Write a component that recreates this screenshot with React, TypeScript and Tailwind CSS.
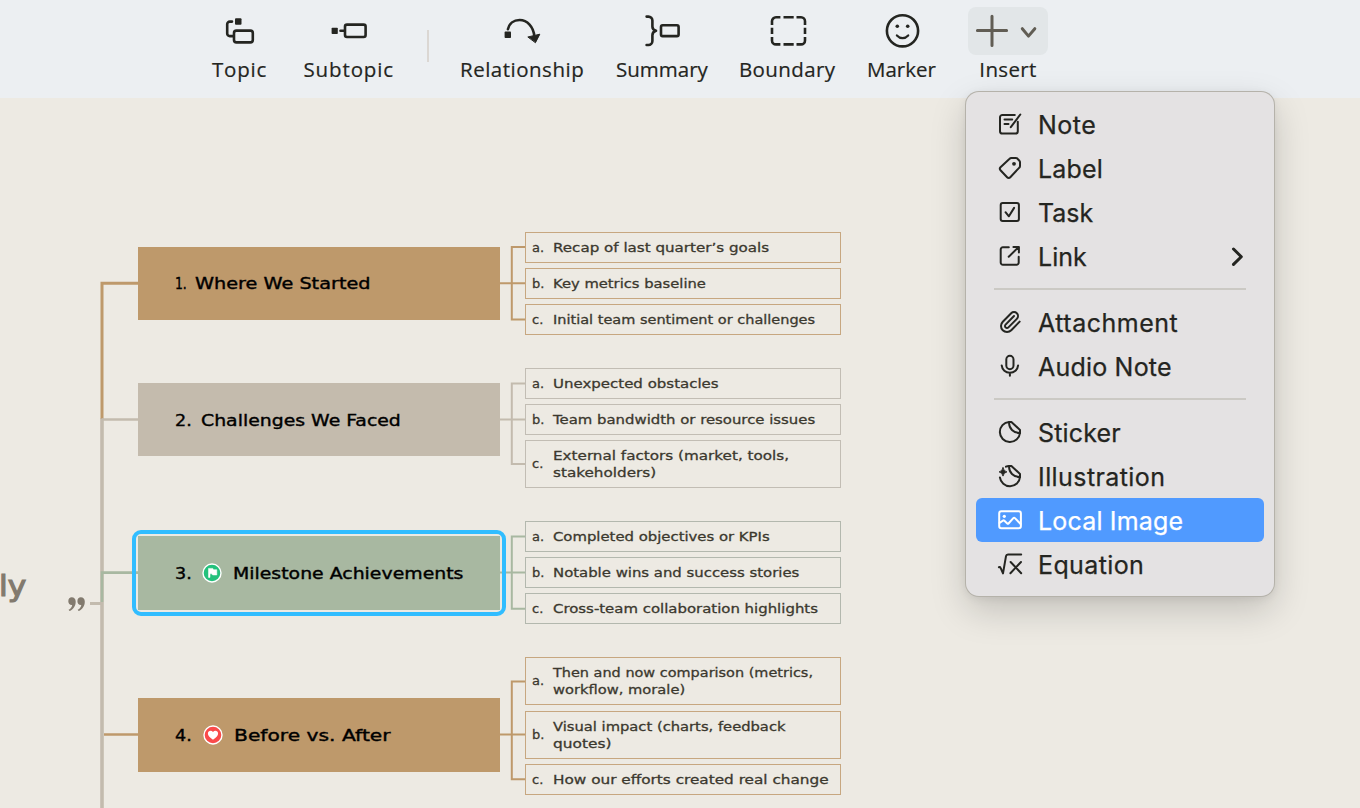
import { useLayoutEffect, useRef, useState } from 'react';
import type { ReactNode } from 'react';

interface FitTextProps {
  text: string;
  width: number;
  stretch?: boolean;
}

// Fits a single line to a fixed width, by tracking or by widening the glyphs
function FitText({ text, width, stretch }: FitTextProps) {
  const ref = useRef<HTMLSpanElement>(null);
  const [natural, setNatural] = useState(0);

  useLayoutEffect(() => {
    if (ref.current) setNatural(ref.current.offsetWidth);
  }, []);

  const style = !natural
    ? undefined
    : stretch
      ? { transform: `scaleX(${width / natural})` }
      : { letterSpacing: `${(width - natural) / text.length}px` };

  return (
    <span ref={ref} className="inline-block origin-left whitespace-nowrap" style={style}>
      {text}
    </span>
  );
}

interface Tool {
  label: string;
  textWidth: number;
  box: string;
  icon: ReactNode;
}

const TOOLS: Tool[] = [
  {
    label: 'Topic',
    textWidth: 55,
    box: 'w-[54px]',
    icon: (
      <>
        <rect x="16" y="11.3" width="6.5" height="6.5" rx="1" fill="currentColor" stroke="none" />
        <path d="M13 14.6h-2.2a2.6 2.6 0 0 0-2.6 2.6v9.3a2.6 2.6 0 0 0 2.6 2.6H14" />
        <rect x="15" y="23.6" width="18.8" height="11.8" rx="2.4" />
      </>
    ),
  },
  {
    label: 'Subtopic',
    textWidth: 91,
    box: 'ml-[37.5px] w-[91px]',
    icon: (
      <>
        <rect x="2.6" y="20.7" width="6.2" height="6.3" rx="0.8" fill="currentColor" stroke="none" />
        <path d="M11.5 23.8h4" />
        <rect x="16" y="17.6" width="20.6" height="12.4" rx="2" />
      </>
    ),
  },
  {
    label: 'Relationship',
    textWidth: 124,
    box: 'w-[123px]',
    icon: (
      <>
        <rect x="2.6" y="24.6" width="6.4" height="6.4" rx="0.8" fill="currentColor" stroke="none" />
        <path d="M5.9 22.2C7.2 16.6 11.6 13 17.6 13c7.6 0 14 6.6 14.8 16.5" />
        <path d="M26.2 29.9 37.8 27.2 33.6 35.4Z" fill="currentColor" strokeWidth="1" />
      </>
    ),
  },
  {
    label: 'Summary',
    textWidth: 92,
    box: 'ml-[33px] w-[91px]',
    icon: (
      <>
        <path d="M4.6 9.6h1.8a4 4 0 0 1 4 4v5.8c0 2.5 1.2 3.7 3.6 4.4-2.4.7-3.6 1.9-3.6 4.4V34a4 4 0 0 1-4 4H4.6" />
        <rect x="19" y="18.3" width="17.6" height="10.8" rx="1.6" />
      </>
    ),
  },
  {
    label: 'Boundary',
    textWidth: 96,
    box: 'ml-8 w-[96px]',
    icon: (
      <path
        strokeLinecap="butt"
        d="M5 18v-3.7a4 4 0 0 1 4-4h4.4M16.5 10.3h10.2M29.5 10.3H34a4 4 0 0 1 4 4V18M38 20.7V27M38 30v3.4a4 4 0 0 1-4 4h-4.5M26.7 37.4H16.5M13.4 37.4H9a4 4 0 0 1-4-4V30M5 27v-6.3"
      />
    ),
  },
  {
    label: 'Marker',
    textWidth: 69,
    box: 'ml-8 w-[69px]',
    icon: (
      <>
        <circle cx="20.5" cy="23.8" r="15.6" />
        <circle cx="15.3" cy="19.3" r="1.8" fill="currentColor" stroke="none" />
        <circle cx="25.7" cy="19.3" r="1.8" fill="currentColor" stroke="none" />
        <path d="M14.9 28.4c3.3 3.6 8 3.6 11.3 0" strokeWidth="2.2" />
      </>
    ),
  },
];

function ToolButton({ tool }: { tool: Tool }) {
  return (
    <button className={`flex shrink-0 flex-col items-center ${tool.box}`}>
      <svg
        width="40"
        height="48"
        viewBox="0 0 40 48"
        fill="none"
        stroke="currentColor"
        strokeWidth="2.6"
        strokeLinecap="round"
        strokeLinejoin="round"
        className="overflow-visible"
      >
        {tool.icon}
      </svg>
      <span className="h-7 self-start text-[20.5px] leading-[29px]">
        <FitText text={tool.label} width={tool.textWidth} />
      </span>
    </button>
  );
}

function Toolbar() {
  return (
    <header className="flex h-[98px] items-start bg-[#eceff2] pt-[7px] pl-[212px] font-['Open_Sans','Noto_Sans',sans-serif] text-[#242521] [-webkit-text-stroke:0.2px_currentColor]">
      <ToolButton tool={TOOLS[0]} />
      <ToolButton tool={TOOLS[1]} />
      <div className="mt-[23px] mr-[31px] ml-[32.5px] h-8 w-0.5 shrink-0 bg-[#dbd7d3]" />
      {TOOLS.slice(2).map((tool) => (
        <ToolButton key={tool.label} tool={tool} />
      ))}
      <button className="ml-8 flex w-20 shrink-0 flex-col items-center">
        <span className="h-12 w-20 rounded-lg bg-[#e2e6e8] text-[#615d54]">
          <svg width="80" height="48" viewBox="0 0 80 48" fill="none" stroke="currentColor" strokeLinecap="round" strokeLinejoin="round">
            <path d="M24 9.2v29.2M9.4 23.6h29.2" strokeWidth="3" />
            <path d="m54.3 21.7 6.2 7.4 6.3-7.4" strokeWidth="3" />
          </svg>
        </span>
        <span className="h-7 text-[20.5px] leading-[29px]">
          <FitText text="Insert" width={57} />
        </span>
      </button>
    </header>
  );
}

interface MenuEntry {
  label: string;
  width: number;
  icon: ReactNode;
  active?: boolean;
  submenu?: boolean;
}

const FOLD = 'M11.2 1.9h2.2L22 10v3C15.8 13 10.4 8.5 11.2 1.9Z';

const MENU: MenuEntry[][] = [
  [
    {
      label: 'Note',
      width: 58,
      icon: (
        <>
          <path d="M16.8 2.9H4.4A2.4 2.4 0 0 0 2 5.3v13.9a2.4 2.4 0 0 0 2.4 2.4h13a2.4 2.4 0 0 0 2.4-2.4V9.8" />
          <path d="M22.3 2.5 12.8 15.2M6.5 7.6h7.7M6.5 12h4" />
        </>
      ),
    },
    {
      label: 'Label',
      width: 65,
      icon: (
        <>
          <path d="M13.3 2h4.5c.7 0 1.3.2 1.7.7l1.9 2c.4.4.6 1 .6 1.6v3.6c0 .7-.2 1.3-.7 1.7l-9 9.6a2.2 2.2 0 0 1-3.2 0l-6.6-7a2.2 2.2 0 0 1 0-3L11.6 2.7c.5-.5 1-.7 1.7-.7Z" />
          <circle cx="16" cy="7.8" r="1.9" fill="currentColor" stroke="none" />
        </>
      ),
    },
    {
      label: 'Task',
      width: 55,
      icon: (
        <>
          <rect x="2.7" y="2.9" width="18.2" height="18" rx="2" />
          <path d="m7.5 12.2 3.4 4.1 5.2-8.4" />
        </>
      ),
    },
    {
      label: 'Link',
      width: 49,
      submenu: true,
      icon: (
        <>
          <path d="M10.8 3.2H4.9a2.2 2.2 0 0 0-2.2 2.2v13.2a2.2 2.2 0 0 0 2.2 2.2h13.6a2.2 2.2 0 0 0 2.2-2.2v-5.8" />
          <path d="M10.7 12.8 20.7 3M15.4 2.9h5.5v5.5" />
        </>
      ),
    },
  ],
  [
    {
      label: 'Attachment',
      width: 140,
      icon: (
        <path d="m16 6-8.414 8.586a2 2 0 0 0 2.829 2.829l8.414-8.586a4 4 0 1 0-5.657-5.657l-8.379 8.551a6 6 0 1 0 8.485 8.485l8.379-8.551" />
      ),
    },
    {
      label: 'Audio Note',
      width: 134,
      icon: (
        <>
          <rect x="8.3" y="1.8" width="7.2" height="13.4" rx="3.6" />
          <path d="M3.7 11.4c.4 4.4 3.9 7.3 8.2 7.3s7.8-2.9 8.2-7.3M11.9 19v2.8" />
        </>
      ),
    },
  ],
  [
    {
      label: 'Sticker',
      width: 83,
      icon: (
        <>
          <path d="M11.2 1.9A10.1 10.1 0 1 0 22 13" />
          <path d={FOLD} />
        </>
      ),
    },
    {
      label: 'Illustration',
      width: 127,
      icon: (
        <>
          <path d="M8 2.7c1-.5 2-.7 3.2-.8M22 13A10.1 10.1 0 0 1 1.9 13.4" />
          <path d={FOLD} />
          <path
            d="M5 3.7Q5.6 7.3 8.9 7.9 5.6 8.5 5 12.1 4.4 8.5 1.1 7.9 4.4 7.3 5 3.7Z"
            fill="currentColor"
            strokeWidth="0.9"
          />
        </>
      ),
    },
    {
      label: 'Local Image',
      width: 145,
      active: true,
      icon: (
        <>
          <rect x="1.2" y="3.3" width="21.7" height="17" rx="2.2" />
          <circle cx="6.3" cy="8.3" r="1.6" fill="currentColor" stroke="none" />
          <path d="m1.5 15 3.4-2.4q.8-.5 1.5.1l2.9 2.8q.6.5 1.2 0l4.8-5.4q.8-.8 1.6 0L22.6 16" />
        </>
      ),
    },
    {
      label: 'Equation',
      width: 106,
      icon: (
        <path d="m.9 15.2.5-.1c.6 0 1 .3 1.2.8L5 21.4 8 4.2c.2-1.2.9-1.700 2-1.700h13.200M12.600 10l10.600 11.200M23 10 12.400 21.200" />
      ),
    },
  ],
];

function MenuRow({ entry }: { entry: MenuEntry }) {
  return (
    <li className={`flex h-11 items-center rounded-md pl-[22px] ${entry.active ? 'bg-[#509aff] text-white' : ''}`}>
      <svg
        width="24"
        height="24"
        viewBox="0 0 24 24"
        fill="none"
        stroke="currentColor"
        strokeWidth="2"
        strokeLinecap="round"
        strokeLinejoin="round"
        className="shrink-0 overflow-visible"
      >
        {entry.icon}
      </svg>
      <span className="ml-4 pt-0.5 text-[25px] leading-[30px] [-webkit-text-stroke:0.25px_currentColor]">
        <FitText text={entry.label} width={entry.width} />
      </span>
      {entry.submenu && (
        <svg width="14" height="20" viewBox="0 0 14 20" fill="none" stroke="currentColor" strokeWidth="3" strokeLinecap="round" strokeLinejoin="round" className="mr-[19px] ml-auto">
          <path d="m2.5 3 7.8 7.7-7.8 7.7" />
        </svg>
      )}
    </li>
  );
}

function InsertMenu() {
  return (
    <div className="absolute top-[92px] left-[966px] w-[308px] rounded-[13px] bg-[#e4e2e3] p-2.5 font-['Inter','Liberation_Sans',sans-serif] text-[#242521] shadow-[0_0_0_1px_#b5b2aa,0_14px_36px_rgba(0,0,0,0.18),0_2px_10px_rgba(0,0,0,0.08)]">
      {MENU.map((group, i) => (
        <div key={i}>
          {i > 0 && (
            <div className="flex h-[22px] items-center px-[18px]">
              <div className="h-0.5 w-full bg-[#cbc9c4]" />
            </div>
          )}
          <ul>
            {group.map((entry) => (
              <MenuRow key={entry.label} entry={entry} />
            ))}
          </ul>
        </div>
      ))}
    </div>
  );
}

function FlagMarker() {
  return (
    <svg width="20" height="20" viewBox="0 0 20 20">
      <circle cx="10" cy="10" r="9" fill="#24c17c" stroke="#fff" strokeWidth="1.4" />
      <path d="M6.5 5.4h4.3l.8 1.3h3.2v5.3h-4.2l-.8-1.2H8v3.6H6.5Z" fill="#fff" stroke="#fff" strokeWidth="0.5" strokeLinejoin="round" />
    </svg>
  );
}

function HeartMarker() {
  return (
    <svg width="20" height="20" viewBox="0 0 20 20">
      <circle cx="10" cy="10" r="9" fill="#fa4b4b" stroke="#fff" strokeWidth="1.4" />
      <path d="M10 14.8C6.5 12.3 4.9 10.7 4.9 8.5c0-2.7 3.4-3.7 5.1-1.5 1.7-2.2 5.1-1.2 5.1 1.5 0 2.2-1.6 3.8-5.1 6.3Z" fill="#fff" />
    </svg>
  );
}

interface Branch {
  no: string;
  noWidth: number;
  title: string;
  width: number;
  pad: string;
  box: string;
  marker?: ReactNode;
  selected?: boolean;
}

const BRANCHES: Branch[] = [
  { no: '1.', noWidth: 12, title: 'Where We Started', width: 175, pad: 'w-5', box: 'top-[246.5px] h-[73.5px] bg-[#be996b]' },
  { no: '2.', noWidth: 17, title: 'Challenges We Faced', width: 200, pad: 'w-[26px]', box: 'top-[383px] h-[73px] bg-[#c4bbad]' },
  {
    no: '3.',
    noWidth: 17,
    title: 'Milestone Achievements',
    width: 231,
    pad: 'w-[27px]',
    box: 'top-[535.5px] h-[74.5px] bg-[#a8b8a1]',
    marker: <FlagMarker />,
    selected: true,
  },
  {
    no: '4.',
    noWidth: 17,
    title: 'Before vs. After',
    width: 157,
    pad: 'w-7',
    box: 'top-[697.5px] h-[74px] bg-[#be996b]',
    marker: <HeartMarker />,
  },
];

function BranchNode({ branch }: { branch: Branch }) {
  return (
    <div className={`absolute left-[138px] flex w-[362px] items-center pl-[37px] text-[16.5px] text-black [-webkit-text-stroke:0.4px_currentColor] ${branch.box}`}>
      <span className={`shrink-0 pt-[3px] ${branch.pad}`}>
        <FitText text={branch.no} width={branch.noWidth} stretch />
      </span>
      {branch.marker && <span className="mr-[11px] shrink-0">{branch.marker}</span>}
      <span className="pt-[3px]">
        <FitText text={branch.title} width={branch.width} stretch />
      </span>
      {branch.selected && (
        <div className="absolute -top-1.5 -right-1.5 -bottom-1.5 -left-1.5 rounded-[9px] border-4 border-[#31bdff]" />
      )}
    </div>
  );
}

interface Leaf {
  no: string;
  lines: [string, number][];
  box: string;
}

const LEAVES: Leaf[] = [
  { no: 'a.', lines: [['Recap of last quarter’s goals', 216]], box: 'top-[232px] h-[30.5px] border-[#c7a780]' },
  { no: 'b.', lines: [['Key metrics baseline', 153]], box: 'top-[268px] h-[30.5px] border-[#c7a780]' },
  { no: 'c.', lines: [['Initial team sentiment or challenges', 262]], box: 'top-[304px] h-[30.5px] border-[#c7a780]' },
  { no: 'a.', lines: [['Unexpected obstacles', 166]], box: 'top-[368px] h-[30.5px] border-[#c2bdb4]' },
  { no: 'b.', lines: [['Team bandwidth or resource issues', 262]], box: 'top-[404px] h-[30.5px] border-[#c2bdb4]' },
  { no: 'c.', lines: [['External factors (market, tools,', 236], ['stakeholders)', 103]], box: 'top-[440px] h-[48px] border-[#c2bdb4]' },
  { no: 'a.', lines: [['Completed objectives or KPIs', 217]], box: 'top-[521px] h-[30.5px] border-[#b3b8ae]' },
  { no: 'b.', lines: [['Notable wins and success stories', 246]], box: 'top-[557px] h-[31px] border-[#b3b8ae]' },
  { no: 'c.', lines: [['Cross-team collaboration highlights', 265]], box: 'top-[593px] h-[31px] border-[#b3b8ae]' },
  { no: 'a.', lines: [['Then and now comparison (metrics,', 260], ['workflow, morale)', 132]], box: 'top-[657px] h-[48px] border-[#c7a780]' },
  { no: 'b.', lines: [['Visual impact (charts, feedback', 232], ['quotes)', 58]], box: 'top-[711px] h-[48px] border-[#c7a780]' },
  { no: 'c.', lines: [['How our efforts created real change', 276]], box: 'top-[764px] h-[30.5px] border-[#c7a780]' },
];

function LeafNode({ leaf }: { leaf: Leaf }) {
  return (
    <div className={`absolute left-[525px] flex w-[316px] items-center border pl-1.5 text-[13px] leading-[17.5px] text-[#3b382e] [-webkit-text-stroke:0.3px_currentColor] ${leaf.box}`}>
      <span className="w-[21px] shrink-0">{leaf.no}</span>
      <div className="flex flex-col items-start">
        {leaf.lines.map(([text, width]) => (
          <FitText key={text} text={text} width={width} stretch />
        ))}
      </div>
    </div>
  );
}

function Connectors() {
  return (
    <svg width="1360" height="808" viewBox="0 0 1360 808" fill="none" className="absolute top-0 left-0">
      {/* trunk */}
      <path d="M90 603.5h13" stroke="#c3bbae" strokeWidth="3" />
      <path d="M102 418v390" stroke="#c3bbae" strokeWidth="3.6" />
      <path d="M138 283.2h-36V418.5" stroke="#be996b" strokeWidth="3" />
      <path d="M102 419.5h36" stroke="#c3bbae" strokeWidth="2.6" />
      <path d="M138 572.6h-36V602" stroke="#a8b8a1" strokeWidth="2.6" />
      <path d="M104 734.5h34" stroke="#be996b" strokeWidth="2.6" />
      {/* branches to leaves */}
      <g strokeWidth="2">
        <path d="M525 247h-13.2v72.5H525M500 283.2h25" stroke="#be996b" />
        <path d="M525 383.5h-13.2v80.5H525M500 419.5h25" stroke="#c3bbae" />
        <path d="M525 536.5h-13.2v72.3H525M500 572.6h25" stroke="#a8b8a1" />
        <path d="M525 681.5h-13.2v97.8H525M500 734.5h25" stroke="#be996b" />
      </g>
    </svg>
  );
}

export default function App() {
  return (
    <div className="relative h-[808px] w-[1360px] overflow-hidden bg-[#edeae3] font-['DejaVu_Sans',sans-serif]">
      <Toolbar />
      <Connectors />
      <div className="absolute top-[566px] left-[-1px] text-[29px] leading-[40px] text-[#827a6e] [-webkit-text-stroke:1.2px_currentColor]">
        <FitText text="ly" width={27} stretch />
      </div>
      <svg width="18" height="15" viewBox="0 0 18 15" fill="#827a6e" className="absolute top-[597px] left-[68px]">
        <path d="M3.7.3C6.2.3 7.7 2 7.7 4.8c0 4-2.3 7.8-6.2 9.3L.6 12.7C2.7 11.6 3.9 10 4.2 7.9 2.1 8.2.3 6.7.3 4.2.3 1.9 1.8.3 3.7.3Z" />
        <path d="M12.8.3c2.5 0 4 1.7 4 4.5 0 4-2.3 7.8-6.2 9.3l-.9-1.4c2.1-1.1 3.3-2.7 3.6-4.8-2.1.3-3.9-1.2-3.9-3.7 0-2.3 1.5-3.9 3.4-3.9Z" />
      </svg>
      {BRANCHES.map((branch) => (
        <BranchNode key={branch.no} branch={branch} />
      ))}
      {LEAVES.map((leaf) => (
        <LeafNode key={leaf.lines[0][0]} leaf={leaf} />
      ))}
      <InsertMenu />
    </div>
  );
}
